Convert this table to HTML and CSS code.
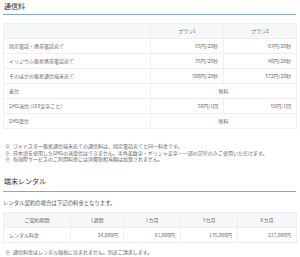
FILE: index.html
```html
<!DOCTYPE html>
<html lang="ja">
<head>
<meta charset="utf-8">
<link rel="stylesheet" href="styles.css">
</head>
<body>
<section class="sec">
  <h2 class="title">通信料</h2>
  <table class="tbl tbl-rate">
    <colgroup><col class="c-name"><col class="c-plan"><col class="c-plan"></colgroup>
    <thead>
      <tr><th></th><th>プラン1</th><th>プラン2</th></tr>
    </thead>
    <tbody>
      <tr><td>固定電話・携帯電話宛て</td><td class="num">55円/20秒</td><td class="num">63円/20秒</td></tr>
      <tr><td>イリジウム衛星携帯電話宛て</td><td class="num">35円/20秒</td><td class="num">40円/20秒</td></tr>
      <tr><td>そのほかの衛星通信端末宛て</td><td class="num">500円/20秒</td><td class="num">572円/20秒</td></tr>
      <tr><td>着信</td><td class="ctr" colspan="2">無料</td></tr>
      <tr><td>SMS送信 (160文字ごと)</td><td class="num">50円/1回</td><td class="num">58円/1回</td></tr>
      <tr><td>SMS受信</td><td class="ctr" colspan="2">無料</td></tr>
    </tbody>
  </table>
  <ul class="notes notes-first">
    <li>ワイドスター衛星通信端末宛ての通信料は、固定電話宛てと同一料金です。</li>
    <li>日本語を使用したSMSの送受信はできません。半角英数字・ギリシャ文字・一部の記号のみご使用いただけます。</li>
    <li>各国際サービスのご利用料金には消費税相当額は加算されません。</li>
  </ul>
</section>
<section class="sec">
  <h2 class="title">端末レンタル</h2>
  <p class="lead">レンタル契約の場合は下記の料金となります。</p>
  <table class="tbl tbl-rent">
    <colgroup><col class="r1"><col class="r2"><col class="r3"><col class="r3"><col class="r5"></colgroup>
    <thead>
      <tr><th>ご契約期間</th><th>1週間</th><th>1カ月</th><th>3カ月</th><th>6カ月</th></tr>
    </thead>
    <tbody>
      <tr><td>レンタル料金</td><td class="num">24,000円</td><td class="num">61,000円</td><td class="num">135,000円</td><td class="num">217,000円</td></tr>
    </tbody>
  </table>
  <ul class="notes">
    <li>通信料金はレンタル価格に含まれません。別途ご請求します。</li>
  </ul>
</section>
</body>
</html>
```
FILE: styles.css
```css
html, body {
  margin: 0;
  padding: 0;
  background: #ffffff;
}
body {
  font-family: "Noto Sans CJK JP", "Noto Sans", sans-serif;
  color: #555;
  padding: 0 4px 0 3px;
  width: 293px;
}
.title {
  margin: 0;
  font-size: 7px;
  font-weight: normal;
  color: #333;
  line-height: 10px;
  padding: 1px 0 3px 1px;
  border-bottom: 1px solid #86a6d4;
}
.sec + .sec .title {
  margin-top: 12px;
  padding-bottom: 5px;
}
.tbl {
  width: 293px;
  border-collapse: collapse;
  table-layout: fixed;
  font-size: 5px;
  color: #6a6a6a;
}
.tbl th, .tbl td {
  border: 1px solid #efefef;
  height: 14px;
  padding: 0 5px;
  line-height: 6px;
  font-weight: normal;
  white-space: nowrap;
  overflow: hidden;
}
.tbl th {
  background: #f6f7f8;
  text-align: center;
}
.tbl-rate {
  margin-top: 8px;
}
.c-name { width: 147px; }
.c-plan { width: 73px; }
.num { text-align: right; }
.ctr { text-align: center; }
.tbl-rent { margin-top: 5px; }
.r1 { width: 67px; }
.r2 { width: 53px; }
.r3 { width: 57px; }
.r5 { width: 59px; }
.tbl-rent td:first-child { text-align: left; }
.notes {
  list-style: none;
  margin: 14px 0 0 0;
  padding: 0;
  font-size: 5px;
  line-height: 6.5px;
  color: #666;
}
.notes li {
  position: relative;
  padding-left: 10px;
  white-space: nowrap;
}
.notes li::before {
  content: "※";
  position: absolute;
  left: 2px;
  top: 0;
}
.tbl-rent + .notes {
  margin-top: 6px;
}
.lead {
  margin: 7px 0 0 0;
  font-size: 5.4px;
  line-height: 8px;
  color: #555;
}
```
